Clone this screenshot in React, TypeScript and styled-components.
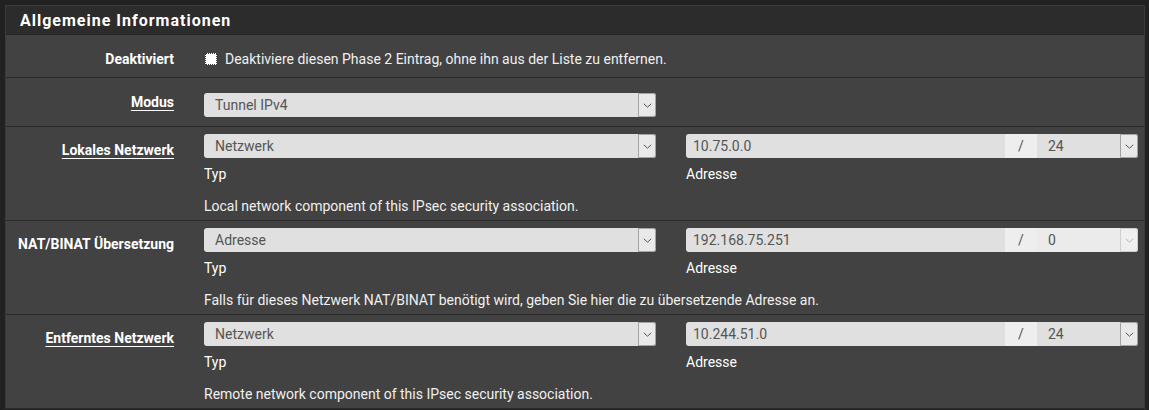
import React from 'react';
import styled, { createGlobalStyle, css } from 'styled-components';

const GlobalStyle = createGlobalStyle`
  html, body {
    margin: 0;
    padding: 0;
    background: #212121;
  }
  body {
    font-family: Roboto, "Liberation Sans", sans-serif;
    font-size: 14px;
    line-height: 18px;
    color: #e6e6e6;
  }
  * { box-sizing: border-box; }
`;

const Page = styled.div`
  padding: 5px 4px 0 5px;
`;

const Panel = styled.section`
  border: 1px solid #3a3a3a;
  border-bottom: none;
  background: #424242;
`;

const PanelHeading = styled.header`
  height: 29px;
  padding: 2px 14px 0;
  display: flex;
  align-items: center;
  background: #2c2c2c;
  border-bottom: 1px solid #262626;
`;

const PanelTitle = styled.h2`
  margin: 0;
  font-size: 16px;
  font-weight: 700;
  letter-spacing: 1px;
  color: #ffffff;
`;

const FormRow = styled.div<{ $tall?: boolean }>`
  display: grid;
  grid-template-columns: 168px 452px 452px;
  column-gap: 30px;
  padding-right: 6px;
  border-bottom: 1px solid #2a2a2a;
  ${({ $tall }) =>
    $tall
      ? css`
          height: 94px;
          padding-top: 7px;
        `
      : css`
          padding-top: 15px;
          padding-bottom: 9px;
        `}
`;

const RowLabel = styled.label<{ $help?: boolean }>`
  grid-column: 1;
  text-align: right;
  font-weight: 700;
  color: #ffffff;
  white-space: nowrap;
  ${({ $help }) =>
    $help &&
    css`
      text-decoration: underline;
      text-underline-offset: 3px;
      text-decoration-thickness: 1px;
    `}
`;

const LabelSlot = styled.div<{ $tall?: boolean }>`
  grid-column: 1;
  grid-row: 1 / span 2;
  text-align: right;
  padding-top: ${({ $tall }) => ($tall ? '7px' : '0')};
`;

const Field = styled.div`
  display: flex;
  flex-direction: column;
`;

const CheckLine = styled.label`
  grid-column: 2 / span 2;
  display: flex;
  align-items: center;
  gap: 8px;
  padding-left: 1px;
  color: #f0f0f0;
`;

const CheckBox = styled.input.attrs({ type: 'checkbox' })`
  appearance: none;
  margin: 0;
  width: 12px;
  height: 12px;
  background: #ffffff;
  border: 1px dotted #3a3a3a;
  border-radius: 1px;
`;

const SelectBox = styled.div<{ $disabled?: boolean; $flat?: 'left' | 'right' }>`
  flex: 1;
  height: 24px;
  display: flex;
  align-items: center;
  padding-left: 11px;
  border-radius: 3px;
  background: ${({ $disabled }) => ($disabled ? '#ebebeb' : '#e0e0e0')};
  color: #555555;
  ${({ $flat }) =>
    $flat === 'left' &&
    css`
      border-top-left-radius: 0;
      border-bottom-left-radius: 0;
    `}
`;

const SelectText = styled.span`
  flex: 1;
  white-space: nowrap;
`;

const Arrow = styled.span<{ $disabled?: boolean }>`
  width: 18px;
  height: 24px;
  display: flex;
  align-items: center;
  justify-content: center;
  border: 1px solid ${({ $disabled }) => ($disabled ? '#cfcfcf' : '#a3a3a3')};
  border-radius: 0 3px 3px 0;
  background: ${({ $disabled }) => ($disabled ? '#efefef' : '#e9e9e9')};
  color: ${({ $disabled }) => ($disabled ? '#b8b8b8' : '#555555')};
`;

const InputGroup = styled.div`
  display: flex;
  height: 24px;
`;

const TextInput = styled.div`
  width: 319px;
  display: flex;
  align-items: center;
  padding-left: 7px;
  background: #e0e0e0;
  color: #555555;
  border-radius: 3px 0 0 3px;
`;

const Addon = styled.span`
  width: 32px;
  display: flex;
  align-items: center;
  justify-content: center;
  background: #eeeeee;
  color: #555555;
`;

const SubLabel = styled.span`
  margin-top: 7px;
  color: #ffffff;
`;

const HelpText = styled.p`
  grid-column: 2 / span 2;
  margin: 9px 0 0;
  color: #f0f0f0;
`;

function Chevron() {
  return (
    <svg width="9" height="5" viewBox="0 0 9 5" fill="none">
      <polyline points="0.8,0.8 4.5,4.2 8.2,0.8" stroke="currentColor" strokeWidth="1" />
    </svg>
  );
}

function Select({ value, disabled, flat }: { value: string; disabled?: boolean; flat?: 'left' }) {
  return (
    <SelectBox $disabled={disabled} $flat={flat}>
      <SelectText>{value}</SelectText>
      <Arrow $disabled={disabled}>
        <Chevron />
      </Arrow>
    </SelectBox>
  );
}

interface NetRow {
  label: string;
  help?: boolean;
  type: string;
  address: string;
  mask: string;
  maskDisabled?: boolean;
  note: string;
}

const networkRows: NetRow[] = [
  {
    label: 'Lokales Netzwerk',
    help: true,
    type: 'Netzwerk',
    address: '10.75.0.0',
    mask: '24',
    note: 'Local network component of this IPsec security association.',
  },
  {
    label: 'NAT/BINAT Übersetzung',
    type: 'Adresse',
    address: '192.168.75.251',
    mask: '0',
    maskDisabled: true,
    note: 'Falls für dieses Netzwerk NAT/BINAT benötigt wird, geben Sie hier die zu übersetzende Adresse an.',
  },
  {
    label: 'Entferntes Netzwerk',
    help: true,
    type: 'Netzwerk',
    address: '10.244.51.0',
    mask: '24',
    note: 'Remote network component of this IPsec security association.',
  },
];

export default function App() {
  return (
    <>
      <GlobalStyle />
      <Page>
        <Panel>
          <PanelHeading>
            <PanelTitle>Allgemeine Informationen</PanelTitle>
          </PanelHeading>

          <FormRow>
            <RowLabel>Deaktiviert</RowLabel>
            <CheckLine>
              <CheckBox />
              Deaktiviere diesen Phase 2 Eintrag, ohne ihn aus der Liste zu entfernen.
            </CheckLine>
          </FormRow>

          <FormRow>
            <RowLabel $help>Modus</RowLabel>
            <Field>
              <Select value="Tunnel IPv4" />
            </Field>
          </FormRow>

          {networkRows.map((row) => (
            <FormRow $tall key={row.label}>
              <LabelSlot $tall>
                <RowLabel $help={row.help}>{row.label}</RowLabel>
              </LabelSlot>
              <Field>
                <InputGroup>
                  <Select value={row.type} />
                </InputGroup>
                <SubLabel>Typ</SubLabel>
              </Field>
              <Field>
                <InputGroup>
                  <TextInput>{row.address}</TextInput>
                  <Addon>/</Addon>
                  <Select value={row.mask} disabled={row.maskDisabled} flat="left" />
                </InputGroup>
                <SubLabel>Adresse</SubLabel>
              </Field>
              <HelpText>{row.note}</HelpText>
            </FormRow>
          ))}
        </Panel>
      </Page>
    </>
  );
}
